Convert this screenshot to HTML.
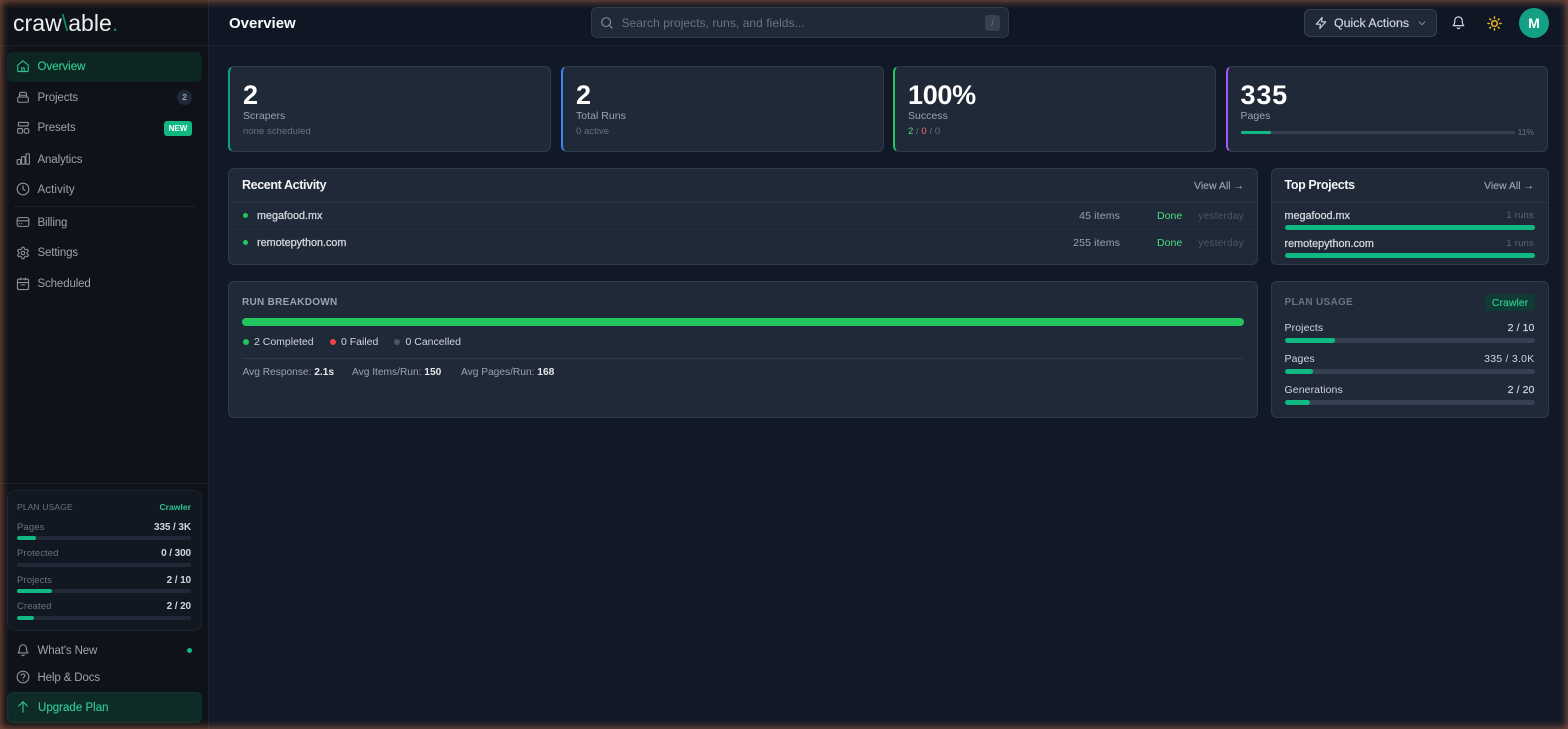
<!DOCTYPE html>
<html lang="en">
<head>
<meta charset="utf-8">
<title>Overview</title>
<style>
*{box-sizing:border-box;margin:0;padding:0}
html,body{width:1568px;height:729px;overflow:hidden;background:#111827}
body{position:relative;font-family:"Liberation Sans",sans-serif;color:#d1d5db}
.a,.t,.r{position:absolute}
.t,.r{white-space:nowrap;line-height:14px;height:14px}
.r{text-align:right}
.b{font-weight:700}
.m{-webkit-text-stroke:.18px currentColor}
svg{position:absolute;fill:none;stroke-linecap:round;stroke-linejoin:round;stroke-width:1.9}
.card{position:absolute;background:#1f2937;border:1px solid #2f3a4a;border-radius:6px}
.nav{font-size:11.5px;color:#9ca3af;letter-spacing:-.13px}
.i{stroke:#8b93a0}
.track{position:absolute;background:#374151;border-radius:3px;height:4px}
.strack{position:absolute;background:#1f2937;border-radius:3px;height:4px;left:17px;width:174px}
.fill{position:absolute;left:0;top:0;height:100%;background:#10b981;border-radius:3px}
.lab{font-size:9.5px;color:#6b7280;letter-spacing:.1px}
.val{font-size:10px;font-weight:700;color:#d1d5db;letter-spacing:-.1px}
.num{font-size:27px;font-weight:700;color:#fff;line-height:28px;height:28px}
.sl{font-size:10.5px;color:#9ca3af;letter-spacing:.03px}
.ss{font-size:9.5px;color:#6b7280;letter-spacing:.05px}
.h3{font-size:12.5px;font-weight:700;color:#f3f4f6;letter-spacing:-.38px}
.va{font-size:10.5px;color:#9ca3af;-webkit-text-stroke:.15px #9ca3af}
.nm{font-size:10.8px;color:#d1d5db;-webkit-text-stroke:.3px #d1d5db}
.mut{font-size:10.5px;color:#9ca3af;letter-spacing:.15px}
.avg{font-size:10.2px;color:#9ca3af}
.leg{font-size:10.5px;color:#d1d5db}
.glow{position:absolute;inset:0;box-shadow:inset 0 0 8px 2px rgba(190,110,75,.6);pointer-events:none;z-index:9}
</style>
</head>
<body>
<!-- sidebar -->
<div class="a" style="left:0;top:0;width:209px;height:729px;background:#0f1218;border-right:1px solid #1c2330"></div>
<div class="t" style="left:13px;top:8px;font-size:23px;line-height:30px;height:30px;color:#eceef1;letter-spacing:.05px">craw<span style="color:#0e8f66">\</span>able<span style="color:#0e8f66">.</span></div>
<div class="a" style="left:0;top:45px;width:208px;height:1px;background:#1a1f29"></div>

<div class="a" style="left:7px;top:52px;width:195px;height:30px;border-radius:6px;background:#0d2622"></div>
<svg style="left:16px;top:59px;stroke:#2fc48f" width="14" height="14" viewBox="0 0 24 24"><path d="M3 10.5 12 3l9 7.5V20a1.5 1.5 0 0 1-1.5 1.5h-15A1.5 1.5 0 0 1 3 20z"/><path d="M10 21.5V15h4v6.5"/></svg>
<div class="t nav m" style="left:37.5px;top:59.5px;color:#2fc48f;letter-spacing:0;font-size:11.5px">Overview</div>

<svg class="i" style="left:16px;top:90px" width="14" height="14" viewBox="0 0 24 24"><rect x="3" y="12" width="18" height="9" rx="2"/><path d="M6 12V7a3 3 0 0 1 3-3h6a3 3 0 0 1 3 3v5M6 9h12"/></svg>
<div class="t nav" style="left:37.5px;top:91px">Projects</div>
<div class="a" style="left:177px;top:90px;width:15px;height:15px;border-radius:50%;background:#1f2937"></div>
<div class="t" style="left:177px;top:90px;width:15px;text-align:center;font-size:8.5px;font-weight:700;color:#9ca3af;line-height:15px">2</div>

<svg class="i" style="left:16px;top:121px" width="14" height="14" viewBox="0 0 24 24"><rect x="4" y="2.5" width="17" height="6" rx="1"/><rect x="3" y="13" width="8" height="8" rx="1"/><rect x="14" y="13" width="8" height="8" rx="3"/></svg>
<div class="t nav" style="left:37.5px;top:121px">Presets</div>
<div class="a" style="left:164px;top:121px;width:28px;height:15px;border-radius:3px;background:#10b981"></div>
<div class="t" style="left:164px;top:121px;width:28px;text-align:center;font-size:8px;font-weight:700;color:#fff;line-height:15px">NEW</div>

<svg class="i" style="left:16px;top:152px" width="14" height="14" viewBox="0 0 24 24"><rect x="2" y="13" width="6" height="8" rx="1.5"/><rect x="9.5" y="8" width="6" height="13" rx="1.5"/><rect x="17" y="3" width="6" height="18" rx="1.5"/></svg>
<div class="t nav" style="left:37.5px;top:153px">Analytics</div>

<svg class="i" style="left:16px;top:182px" width="14" height="14" viewBox="0 0 24 24"><circle cx="12" cy="12" r="10"/><path d="M12 6.5V12l3.5 2.5"/></svg>
<div class="t nav" style="left:37.5px;top:183px;letter-spacing:.1px">Activity</div>

<div class="a" style="left:13px;top:206px;width:183px;height:1px;background:#1a1f29"></div>

<svg class="i" style="left:16px;top:215px" width="14" height="14" viewBox="0 0 24 24"><rect x="2" y="4.5" width="20" height="15" rx="3"/><path d="M2 10h20M6 15h.5M9.5 15h.5"/></svg>
<div class="t nav" style="left:37.5px;top:216px">Billing</div>

<svg class="i" style="left:16px;top:246px" width="14" height="14" viewBox="0 0 24 24"><path d="M12.22 2h-.44a2 2 0 0 0-2 2v.18a2 2 0 0 1-1 1.73l-.43.25a2 2 0 0 1-2 0l-.15-.08a2 2 0 0 0-2.73.73l-.22.38a2 2 0 0 0 .73 2.73l.15.1a2 2 0 0 1 1 1.72v.51a2 2 0 0 1-1 1.74l-.15.09a2 2 0 0 0-.73 2.73l.22.38a2 2 0 0 0 2.73.73l.15-.08a2 2 0 0 1 2 0l.43.25a2 2 0 0 1 1 1.73V20a2 2 0 0 0 2 2h.44a2 2 0 0 0 2-2v-.18a2 2 0 0 1 1-1.73l.43-.25a2 2 0 0 1 2 0l.15.08a2 2 0 0 0 2.73-.73l.22-.39a2 2 0 0 0-.73-2.73l-.15-.08a2 2 0 0 1-1-1.74v-.5a2 2 0 0 1 1-1.74l.15-.09a2 2 0 0 0 .73-2.73l-.22-.38a2 2 0 0 0-2.73-.73l-.15.08a2 2 0 0 1-2 0l-.43-.25a2 2 0 0 1-1-1.73V4a2 2 0 0 0-2-2z"/><circle cx="12" cy="12" r="3"/></svg>
<div class="t nav" style="left:37.5px;top:246px">Settings</div>

<svg class="i" style="left:16px;top:277px" width="14" height="14" viewBox="0 0 24 24"><rect x="2.5" y="3.5" width="19" height="18" rx="2.5"/><path d="M2.5 9.5h19M8 2v3M16 2v3M9 13.5h6"/></svg>
<div class="t nav" style="left:37.5px;top:277px">Scheduled</div>

<div class="a" style="left:0;top:483px;width:208px;height:1px;background:#1a1f29"></div>
<div class="a" style="left:7px;top:490px;width:195px;height:141px;border-radius:8px;background:#111822;border:1px solid #1c2330"></div>
<div class="t" style="left:17px;top:500px;font-size:8.5px;color:#6b7280;letter-spacing:.15px">PLAN USAGE</div>
<div class="r" style="right:1377px;top:500px;font-size:8.6px;font-weight:700;color:#2fc48f">Crawler</div>
<div class="t lab" style="left:17px;top:521px">Pages</div><div class="r val" style="right:1377px;top:521px">335 / 3K</div>
<div class="strack" style="top:536px"><div class="fill" style="width:19px"></div></div>
<div class="t lab" style="left:17px;top:547px">Protected</div><div class="r val" style="right:1377px;top:547px">0 / 300</div>
<div class="strack" style="top:563px"></div>
<div class="t lab" style="left:17px;top:574px">Projects</div><div class="r val" style="right:1377px;top:574px">2 / 10</div>
<div class="strack" style="top:589px"><div class="fill" style="width:35px"></div></div>
<div class="t lab" style="left:17px;top:600px">Created</div><div class="r val" style="right:1377px;top:600px">2 / 20</div>
<div class="strack" style="top:616px"><div class="fill" style="width:17px"></div></div>

<svg class="i" style="left:16px;top:643px" width="14" height="14" viewBox="0 0 24 24"><path d="M6 9a6 6 0 0 1 12 0c0 6 2.5 8 2.5 8h-17S6 15 6 9z"/><path d="M10 20.5a2.2 2.2 0 0 0 4 0"/></svg>
<div class="t nav" style="left:37.5px;top:644px">What's New</div>
<div class="a" style="left:187px;top:648px;width:5px;height:5px;border-radius:50%;background:#10b981"></div>
<svg class="i" style="left:16px;top:670px" width="14" height="14" viewBox="0 0 24 24"><circle cx="12" cy="12" r="10"/><path d="M8.5 9a3.5 3.5 0 0 1 6.8 1c0 2-3.2 2.6-3.2 4M12 17.5h.01"/></svg>
<div class="t nav" style="left:37.5px;top:671px">Help &amp; Docs</div>
<div class="a" style="left:7px;top:692px;width:195px;height:31px;border-radius:6px;background:#0e2b27;border:1px solid #10352e"></div>
<svg style="left:16px;top:700px;stroke:#2fc48f" width="14" height="14" viewBox="0 0 24 24"><path d="M12 21V3M4.5 10.5 12 3l7.5 7.5"/></svg>
<div class="t m" style="left:38px;top:700.5px;font-size:11.5px;letter-spacing:.02px;color:#2fc48f">Upgrade Plan</div>

<!-- header -->
<div class="a" style="left:209px;top:0;width:1359px;height:46px;background:#0f1724;border-bottom:1px solid #1a2332"></div>
<div class="t" style="left:229px;top:16px;font-size:15px;line-height:16px;height:16px;font-weight:700;color:#f9fafb">Overview</div>
<div class="a" style="left:591px;top:7px;width:418px;height:31px;border-radius:6px;background:#1f2937;border:1px solid #2f3a4a"></div>
<svg style="left:600px;top:16px;stroke:#8b93a0" width="14" height="14" viewBox="0 0 24 24"><circle cx="10.5" cy="10.5" r="7.5"/><path d="m21 21-5.2-5.2"/></svg>
<div class="t" style="left:621.5px;top:16px;font-size:12px;color:#6b7280;letter-spacing:.05px">Search projects, runs, and fields...</div>
<div class="a" style="left:985px;top:15px;width:15px;height:16px;border-radius:3px;background:#374151"></div>
<div class="t" style="left:985px;top:16px;width:15px;text-align:center;font-size:9px;color:#6b7280">/</div>

<div class="a" style="left:1304px;top:9px;width:133px;height:28px;border-radius:6px;background:#1f2937;border:1px solid #374151"></div>
<svg style="left:1314px;top:16px;stroke:#d1d5db" width="14" height="14" viewBox="0 0 24 24"><path d="M14 2.5 4 14h7l-1 7.5L20 10h-7z"/></svg>
<div class="t m" style="left:1334px;top:16px;font-size:12.4px;color:#d1d5db">Quick Actions</div>
<svg style="left:1417px;top:18px;stroke:#9ca3af" width="10" height="10" viewBox="0 0 24 24"><path d="m5 9 7 7 7-7"/></svg>
<svg style="left:1450.5px;top:15px;stroke:#d1d5db" width="15" height="15" viewBox="0 0 24 24"><path d="M6 9a6 6 0 0 1 12 0c0 6 2.5 8 2.5 8h-17S6 15 6 9z"/><path d="M10 20.5a2.2 2.2 0 0 0 4 0"/></svg>
<svg style="left:1486.5px;top:15.5px;stroke:#fbbf24;stroke-width:2.3" width="15" height="15" viewBox="0 0 24 24"><circle cx="12" cy="12" r="4.5"/><path d="M12 1.5v2M12 20.5v2M1.5 12h2M20.5 12h2M4.6 4.6 6 6M18 18l1.4 1.4M4.6 19.4 6 18M18 6l1.4-1.4"/></svg>
<div class="a" style="left:1519px;top:8px;width:30px;height:30px;border-radius:50%;background:#14a085"></div>
<div class="t" style="left:1519px;top:8px;width:30px;height:30px;line-height:30px;text-align:center;font-size:14px;font-weight:700;color:#fff">M</div>

<!-- stat cards -->
<div class="card" style="left:228px;top:66px;width:323px;height:86px;border-left:2px solid #14a085"></div>
<div class="t num" style="left:243px;top:81px">2</div>
<div class="t sl" style="left:243px;top:109px">Scrapers</div>
<div class="t ss" style="left:243px;top:124.5px">none scheduled</div>

<div class="card" style="left:561px;top:66px;width:323px;height:86px;border-left:2px solid #3b82f6"></div>
<div class="t num" style="left:576px;top:81px">2</div>
<div class="t sl" style="left:576px;top:109px">Total Runs</div>
<div class="t ss" style="left:576px;top:124.5px">0 active</div>

<div class="card" style="left:893px;top:66px;width:323px;height:86px;border-left:2px solid #22c55e"></div>
<div class="t num" style="left:908px;top:81px;letter-spacing:-.3px">100%</div>
<div class="t sl" style="left:908px;top:109px">Success</div>
<div class="t ss" style="left:908px;top:124.5px"><span style="color:#4ade80">2</span> / <span style="color:#f87171">0</span> / 0</div>

<div class="card" style="left:1226px;top:66px;width:322px;height:86px;border-left:2px solid #a855f7"></div>
<div class="t num" style="left:1240.5px;top:81px;letter-spacing:.8px">335</div>
<div class="t sl" style="left:1240.5px;top:109px">Pages</div>
<div class="track" style="left:1240.5px;top:130.5px;width:274px;height:3px"><div class="fill" style="width:30px"></div></div>
<div class="r" style="right:34px;top:125px;font-size:8.5px;color:#6b7280">11%</div>

<!-- recent activity -->
<div class="card" style="left:228px;top:168px;width:1030px;height:97px"></div>
<div class="a" style="left:229px;top:202px;width:1028px;height:1px;background:#2b3544"></div>
<div class="a" style="left:229px;top:229px;width:1028px;height:1px;background:#252f3d"></div>
<div class="t h3" style="left:242px;top:178px">Recent Activity</div>
<div class="r va" style="right:324px;top:178.5px">View All →</div>
<div class="a" style="left:242.5px;top:213px;width:5px;height:5px;border-radius:50%;background:#22c55e"></div>
<div class="t nm" style="left:257px;top:208.5px">megafood.mx</div>
<div class="r mut" style="right:448px;top:208.5px">45 items</div>
<div class="t" style="left:1157px;top:208.5px;font-size:10.5px;color:#4ade80;letter-spacing:.05px">Done</div>
<div class="r" style="right:324px;top:210px;font-size:10px;color:#4b5563;letter-spacing:.25px">yesterday</div>
<div class="a" style="left:242.5px;top:240px;width:5px;height:5px;border-radius:50%;background:#22c55e"></div>
<div class="t nm" style="left:257px;top:235.5px">remotepython.com</div>
<div class="r mut" style="right:448px;top:235.5px">255 items</div>
<div class="t" style="left:1157px;top:235.5px;font-size:10.5px;color:#4ade80;letter-spacing:.05px">Done</div>
<div class="r" style="right:324px;top:237px;font-size:10px;color:#4b5563;letter-spacing:.25px">yesterday</div>

<!-- top projects -->
<div class="card" style="left:1271px;top:168px;width:278px;height:97px"></div>
<div class="a" style="left:1272px;top:202px;width:276px;height:1px;background:#2b3544"></div>
<div class="t h3" style="left:1284.5px;top:178px">Top Projects</div>
<div class="r va" style="right:34px;top:178.5px">View All →</div>
<div class="t nm" style="left:1284.5px;top:208.5px">megafood.mx</div>
<div class="r" style="right:34px;top:208.5px;font-size:9.5px;color:#5b6472;letter-spacing:.2px">1 runs</div>
<div class="track" style="left:1284.5px;top:224.5px;width:250px;height:5px;background:#10b981"></div>
<div class="t nm" style="left:1284.5px;top:236.5px">remotepython.com</div>
<div class="r" style="right:34px;top:236.5px;font-size:9.5px;color:#5b6472;letter-spacing:.2px">1 runs</div>
<div class="track" style="left:1284.5px;top:252.5px;width:250px;height:5px;background:#10b981"></div>

<!-- run breakdown -->
<div class="card" style="left:228px;top:281px;width:1030px;height:137px"></div>
<div class="t" style="left:242px;top:296px;font-size:10px;font-weight:700;color:#9ca3af;letter-spacing:.3px">RUN BREAKDOWN</div>
<div class="a" style="left:242px;top:318px;width:1002px;height:8px;border-radius:4px;background:#22c55e"></div>
<div class="a" style="left:243px;top:339px;width:6px;height:6px;border-radius:50%;background:#22c55e"></div>
<div class="t leg" style="left:254px;top:334.5px">2 Completed</div>
<div class="a" style="left:330px;top:339px;width:6px;height:6px;border-radius:50%;background:#ef4444"></div>
<div class="t leg" style="left:341px;top:334.5px">0 Failed</div>
<div class="a" style="left:394px;top:339px;width:6px;height:6px;border-radius:50%;background:#4b5563"></div>
<div class="t leg" style="left:405.5px;top:334.5px">0 Cancelled</div>
<div class="a" style="left:242px;top:358px;width:1002px;height:1px;background:#2f3a49"></div>
<div class="t avg" style="left:242.5px;top:366px">Avg Response: <b style="color:#e5e7eb">2.1s</b></div>
<div class="t avg" style="left:352px;top:366px">Avg Items/Run: <b style="color:#e5e7eb">150</b></div>
<div class="t avg" style="left:461px;top:366px">Avg Pages/Run: <b style="color:#e5e7eb">168</b></div>

<!-- plan usage -->
<div class="card" style="left:1271px;top:281px;width:278px;height:137px"></div>
<div class="t" style="left:1284.5px;top:296px;font-size:10px;font-weight:700;color:#6b7280;letter-spacing:.3px">PLAN USAGE</div>
<div class="a" style="left:1485px;top:294px;width:50px;height:17px;border-radius:3px;background:#123a35"></div>
<div class="t m" style="left:1485px;top:295.5px;width:50px;text-align:center;font-size:10.5px;color:#2fc48f">Crawler</div>
<div class="t" style="left:1284.5px;top:320.5px;font-size:10.5px;color:#d1d5db;letter-spacing:.1px">Projects</div>
<div class="r m" style="right:33.5px;top:320.5px;font-size:10.5px;color:#d1d5db;letter-spacing:.1px">2 / 10</div>
<div class="track" style="left:1284.5px;top:338px;width:250px;height:5px"><div class="fill" style="width:50px"></div></div>
<div class="t" style="left:1284.5px;top:351.5px;font-size:10.5px;color:#d1d5db;letter-spacing:.1px">Pages</div>
<div class="r" style="right:33.5px;top:351.5px;font-size:10.5px;color:#d1d5db;letter-spacing:.25px">335 / 3.0K</div>
<div class="track" style="left:1284.5px;top:368.5px;width:250px;height:5px"><div class="fill" style="width:28px"></div></div>
<div class="t" style="left:1284.5px;top:382.5px;font-size:10.5px;color:#d1d5db;letter-spacing:.1px">Generations</div>
<div class="r m" style="right:33.5px;top:382.5px;font-size:10.5px;color:#d1d5db;letter-spacing:.1px">2 / 20</div>
<div class="track" style="left:1284.5px;top:399.5px;width:250px;height:5px"><div class="fill" style="width:25px"></div></div>

<div class="glow"></div>
</body>
</html>
